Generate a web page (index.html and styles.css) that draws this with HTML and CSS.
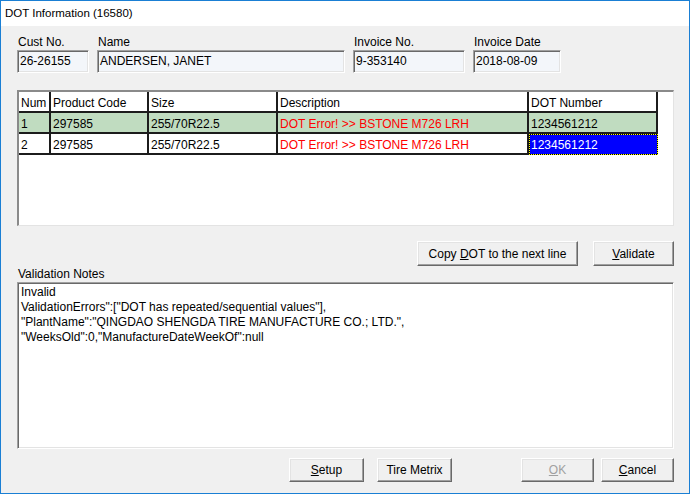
FILE: index.html
```html
<!DOCTYPE html>
<html>
<head>
<meta charset="utf-8">
<link rel="stylesheet" href="styles.css">
</head>
<body>
<div class="window">
  <div class="titlebar">DOT Information (16580)</div>
  <div class="content">
    <div class="fields">
      <div class="field w-cust"><div class="lbl">Cust No.</div><div class="input">26-26155</div></div>
      <div class="field w-name"><div class="lbl">Name</div><div class="input">ANDERSEN, JANET</div></div>
      <div class="field w-inv"><div class="lbl">Invoice No.</div><div class="input">9-353140</div></div>
      <div class="field w-date"><div class="lbl">Invoice Date</div><div class="input">2018-08-09</div></div>
    </div>
    <div class="grid">
      <table class="tbl">
        <colgroup>
          <col class="c-num"><col class="c-pc"><col class="c-size"><col class="c-desc"><col class="c-dot">
        </colgroup>
        <tr class="hdr"><td>Num</td><td>Product Code</td><td>Size</td><td>Description</td><td>DOT Number</td></tr>
        <tr class="sel"><td>1</td><td>297585</td><td>255/70R22.5</td><td class="err">DOT Error! &gt;&gt; BSTONE M726 LRH</td><td>1234561212</td></tr>
        <tr><td>2</td><td>297585</td><td>255/70R22.5</td><td class="err">DOT Error! &gt;&gt; BSTONE M726 LRH</td><td class="focus">1234561212</td></tr>
      </table>
    </div>
    <div class="btnrow">
      <div class="btn b-copy"><span>Copy <u>D</u>OT to the next line</span></div>
      <div class="btn b-val"><span><u>V</u>alidate</span></div>
    </div>
    <div class="lbl notes-lbl">Validation Notes</div>
    <div class="notes">Invalid<br>ValidationErrors":["DOT has repeated/sequential values"],<br>"PlantName":"QINGDAO SHENGDA TIRE MANUFACTURE CO.; LTD.",<br>"WeeksOld":0,"ManufactureDateWeekOf":null</div>
    <div class="bottom">
      <div class="btn b-setup"><span><u>S</u>etup</span></div>
      <div class="btn b-tire"><span>Tire Metrix</span></div>
      <div class="btn b-ok disabled"><span><u>O</u>K</span></div>
      <div class="btn b-cancel"><span><u>C</u>ancel</span></div>
    </div>
  </div>
</div>
</body>
</html>
```
FILE: styles.css
```css
html, body {
  margin: 0;
  padding: 0;
  background: #f0f0f0;
}
body {
  font-family: "Liberation Sans", Arial, sans-serif;
  font-size: 12px;
  color: #000;
}
.window {
  width: 690px;
  height: 494px;
  box-sizing: border-box;
  border: 1px solid #1a7fd4;
  background: #f0f0f0;
  display: flex;
  flex-direction: column;
}
.titlebar {
  height: 25px;
  line-height: 25px;
  background: #fff;
  padding-left: 4px;
  font-size: 11.5px;
  color: #000;
}
.content {
  padding: 9px 15px 0 16px;
  display: flex;
  flex-direction: column;
}
.fields {
  display: flex;
  gap: 8px;
}
.field {
  display: flex;
  flex-direction: column;
}
.w-cust { width: 72px; }
.w-name { width: 248px; }
.w-inv { width: 112px; }
.w-date { width: 88px; }
.lbl {
  height: 15px;
  line-height: 15px;
  padding-left: 1px;
}
.input {
  height: 23px;
  box-sizing: border-box;
  line-height: 21px;
  padding-left: 2px;
  background: #f3f6fa;
  border: 1px solid;
  border-color: #a0a0a0 #ffffff #ffffff #a0a0a0;
  box-shadow: inset 1px 1px 0 #696969, inset -1px -1px 0 #e3e3e3;
  white-space: nowrap;
  overflow: hidden;
}
.grid {
  margin-top: 17px;
  height: 136px;
  box-sizing: border-box;
  background: #fff;
  border-style: solid;
  border-width: 2px 1px 1px 2px;
  border-color: #8a8a8a #e3e3e3 #e3e3e3 #8a8a8a;
  overflow: hidden;
}
.tbl {
  border-collapse: separate;
  border-spacing: 0;
  table-layout: fixed;
  width: 639px;
}
.c-num { width: 32px; }
.c-pc { width: 98px; }
.c-size { width: 129px; }
.c-desc { width: 251px; }
.c-dot { width: 129px; }
.tbl td {
  height: 16px;
  padding: 3px 0 0 2px;
  line-height: 16px;
  vertical-align: top;
  border-right: 2px solid #1c1c1c;
  border-bottom: 2px solid #1c1c1c;
  white-space: nowrap;
  overflow: hidden;
  box-sizing: content-box;
}
.hdr td {
  background: #fff;
}
.sel td {
  background: #c0dcc0;
}
.tbl td.err {
  color: #ff0000;
}
.tbl td.focus {
  background: #0000ff;
  color: #fff;
  border: none;
  outline: 1px dotted #ffff00;
  outline-offset: -1px;
  box-shadow: inset 0 0 0 1px #000;
  padding-right: 2px;
  padding-bottom: 2px;
}
.btnrow {
  margin-top: 15px;
  display: flex;
  justify-content: flex-end;
  gap: 15px;
}
.btn {
  box-sizing: border-box;
  display: flex;
  align-items: center;
  justify-content: center;
  background: #f0f0f0;
  border: 1px solid;
  border-color: #ffffff #696969 #696969 #ffffff;
  box-shadow: inset -1px -1px 0 #a0a0a0, inset 1px 1px 0 #e3e3e3;
  white-space: nowrap;
}
.btnrow .btn { height: 25px; }
.b-copy { width: 161px; }
.b-val { width: 81px; }
.notes-lbl {
  height: 16px;
  line-height: 16px;
}
.notes {
  height: 167px;
  box-sizing: border-box;
  background: #fff;
  border: 1px solid;
  border-color: #a0a0a0 #ffffff #ffffff #a0a0a0;
  box-shadow: inset 1px 1px 0 #696969, inset -1px -1px 0 #e3e3e3;
  padding: 2px 3px;
  line-height: 15px;
}
.bottom {
  margin-top: 9px;
  display: flex;
  justify-content: flex-end;
  gap: 7px;
}
.bottom .btn { height: 24px; }
.b-setup { width: 75px; margin-right: 6px; }
.b-tire { width: 75px; margin-right: 62px; }
.b-ok { width: 73px; }
.b-cancel { width: 73px; }
.disabled { color: #a0a0a0; }
```
